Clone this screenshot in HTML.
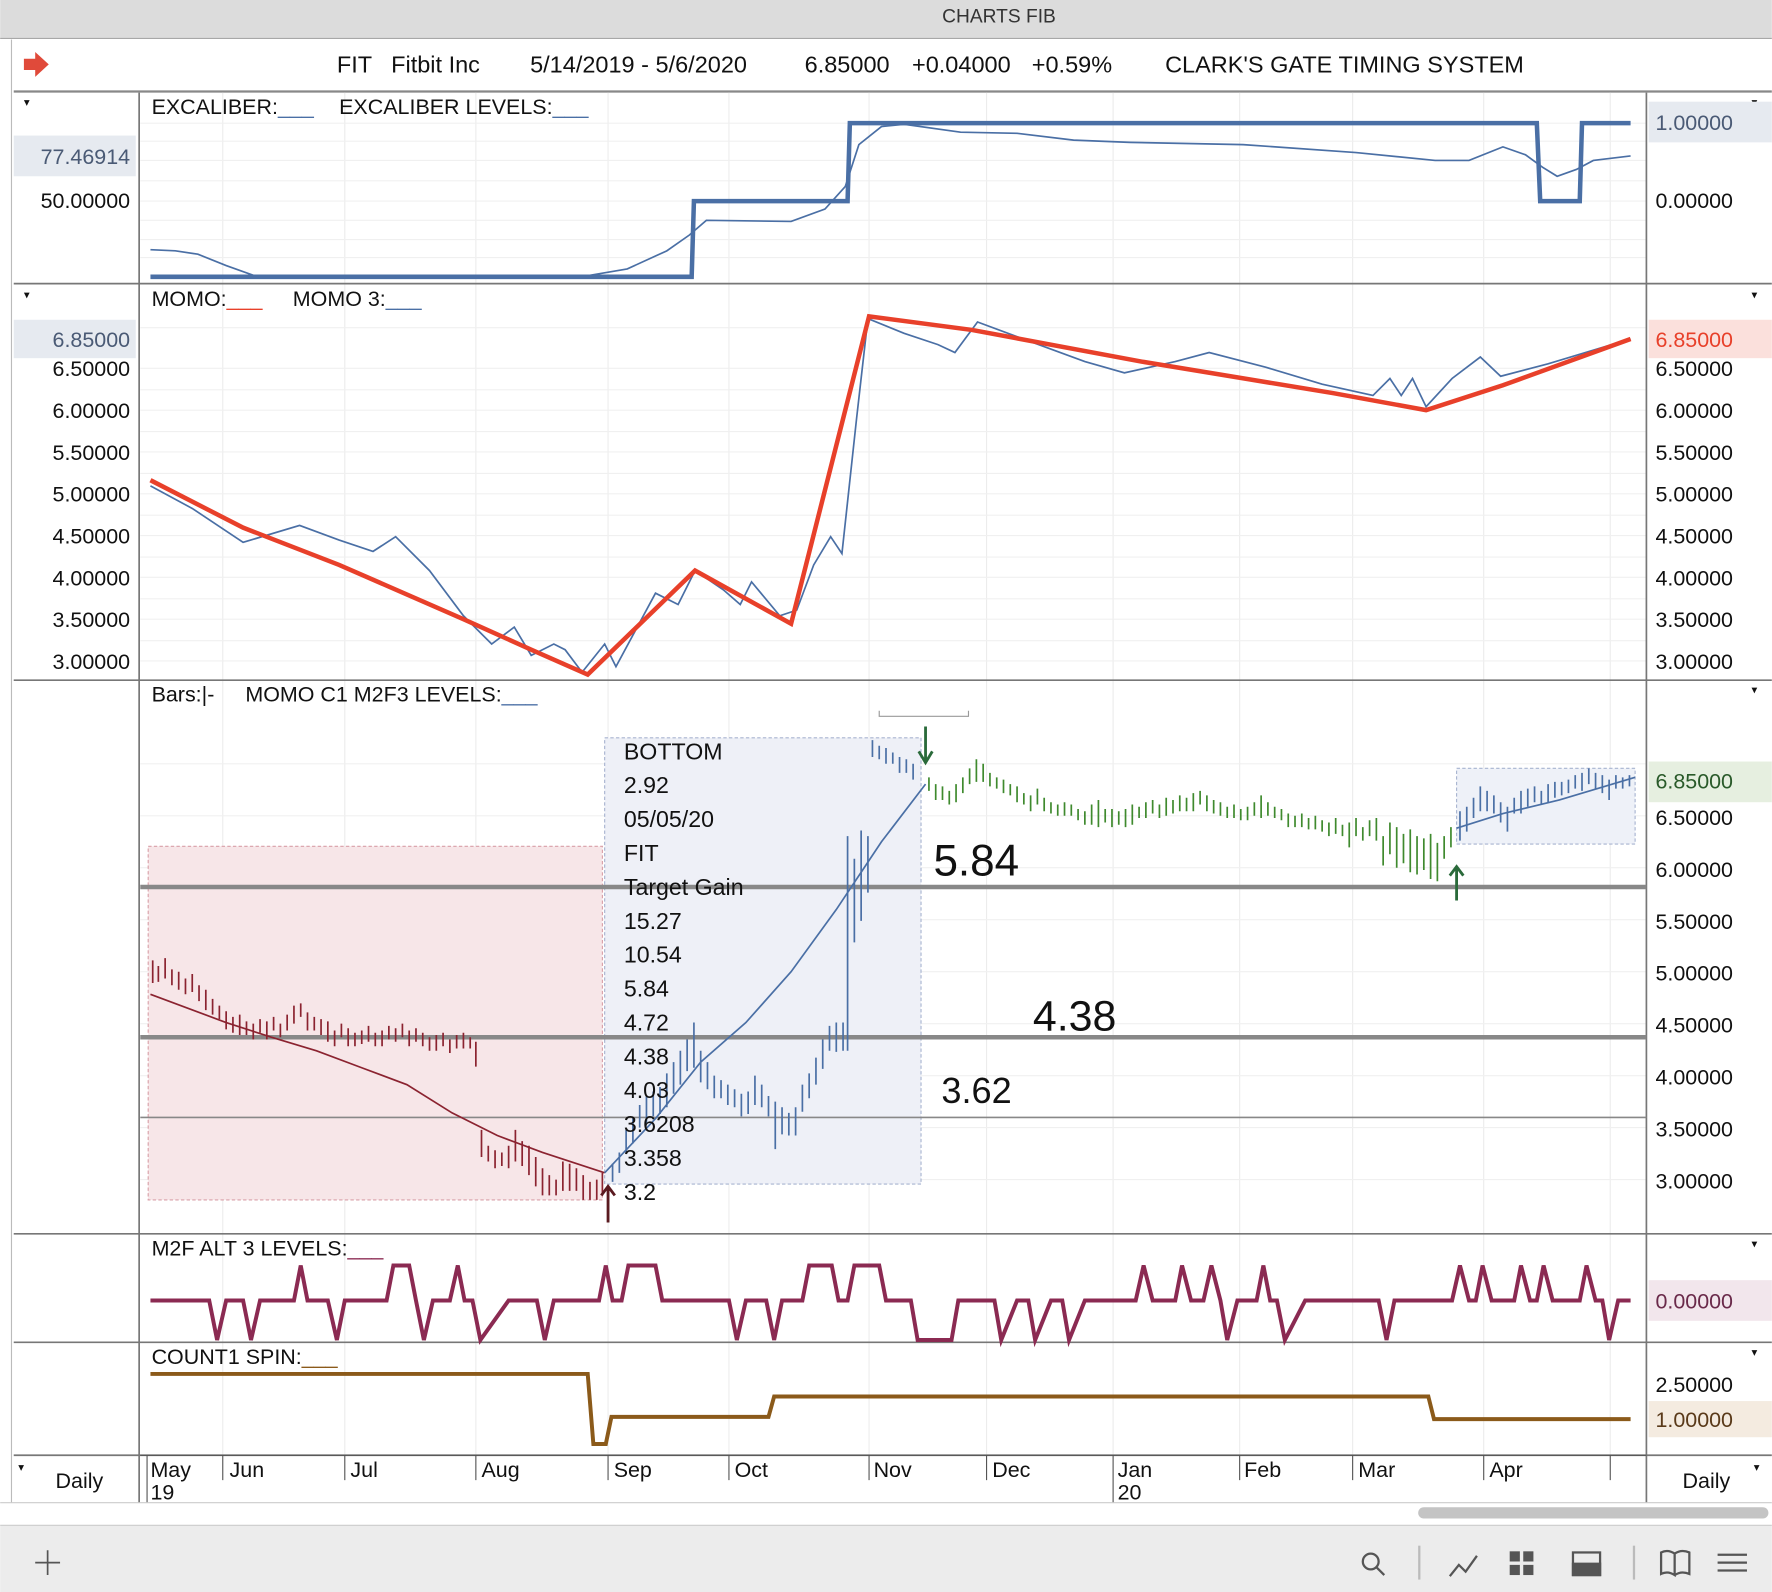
<!DOCTYPE html>
<html><head><meta charset="utf-8"><style>
html,body{margin:0;padding:0;background:#fff;}
svg{display:block;}
text{font-family:"Liberation Sans",Arial,sans-serif;}
</style></head><body>
<svg width="1772" height="1592" viewBox="0 0 1568 1409" xmlns="http://www.w3.org/2000/svg">
<rect x="0" y="0" width="1568" height="34" fill="#dcdcdc"/>
<line x1="0" y1="34" x2="1568" y2="34" stroke="#a8a8a8"/>
<text x="884" y="20" font-size="17" text-anchor="middle" fill="#333">CHARTS FIB</text>
<line x1="10" y1="35" x2="10" y2="1330" stroke="#bbb"/>
<path d="M21 52 h10 v-6 l12 11 l-12 11 v-6 h-10z" fill="#e04a3a"/>
<g font-size="20.8" fill="#111">
<text x="298" y="64">FIT</text><text x="346" y="64">Fitbit Inc</text>
<text x="469" y="64">5/14/2019 - 5/6/2020</text>
<text x="712" y="64">6.85000</text><text x="807" y="64">+0.04000</text><text x="913" y="64">+0.59%</text>
<text x="1031" y="64">CLARK'S GATE TIMING SYSTEM</text>
</g>
<line x1="12" y1="81" x2="1568" y2="81" stroke="#888" stroke-width="2"/>
<g stroke="#ececec" stroke-width="1">
<line x1="197" y1="82" x2="197" y2="1288"/><line x1="305" y1="82" x2="305" y2="1288"/>
<line x1="421" y1="82" x2="421" y2="1288"/><line x1="538" y1="82" x2="538" y2="1288"/>
<line x1="645" y1="82" x2="645" y2="1288"/><line x1="769" y1="82" x2="769" y2="1288"/>
<line x1="873" y1="82" x2="873" y2="1288"/><line x1="985" y1="82" x2="985" y2="1288"/>
<line x1="1097" y1="82" x2="1097" y2="1288"/><line x1="1197" y1="82" x2="1197" y2="1288"/>
<line x1="1313" y1="82" x2="1313" y2="1288"/><line x1="1425" y1="82" x2="1425" y2="1288"/>
</g>
<g stroke="#f0f0f0">
<line x1="124" y1="109" x2="1457" y2="109"/><line x1="124" y1="125" x2="1457" y2="125"/><line x1="124" y1="142" x2="1457" y2="142"/><line x1="124" y1="160" x2="1457" y2="160"/><line x1="124" y1="178" x2="1457" y2="178"/><line x1="124" y1="195" x2="1457" y2="195"/><line x1="124" y1="212" x2="1457" y2="212"/><line x1="124" y1="228" x2="1457" y2="228"/>
<line x1="124" y1="290" x2="1457" y2="290"/><line x1="124" y1="326" x2="1457" y2="326"/><line x1="124" y1="363" x2="1457" y2="363"/><line x1="124" y1="400" x2="1457" y2="400"/><line x1="124" y1="437" x2="1457" y2="437"/><line x1="124" y1="474" x2="1457" y2="474"/><line x1="124" y1="511" x2="1457" y2="511"/><line x1="124" y1="548" x2="1457" y2="548"/><line x1="124" y1="585" x2="1457" y2="585"/>
<line x1="124" y1="345" x2="1457" y2="345"/><line x1="124" y1="382" x2="1457" y2="382"/><line x1="124" y1="419" x2="1457" y2="419"/><line x1="124" y1="456" x2="1457" y2="456"/><line x1="124" y1="493" x2="1457" y2="493"/><line x1="124" y1="530" x2="1457" y2="530"/><line x1="124" y1="567" x2="1457" y2="567"/>
<line x1="124" y1="676" x2="1457" y2="676"/><line x1="124" y1="722" x2="1457" y2="722"/><line x1="124" y1="768" x2="1457" y2="768"/><line x1="124" y1="814" x2="1457" y2="814"/><line x1="124" y1="860" x2="1457" y2="860"/><line x1="124" y1="906" x2="1457" y2="906"/><line x1="124" y1="952" x2="1457" y2="952"/><line x1="124" y1="998" x2="1457" y2="998"/><line x1="124" y1="1044" x2="1457" y2="1044"/>
</g>
<g stroke="#777" stroke-width="1.5">
<line x1="12" y1="251" x2="1568" y2="251"/><line x1="12" y1="602" x2="1568" y2="602"/>
<line x1="12" y1="1092" x2="1568" y2="1092"/><line x1="12" y1="1188" x2="1568" y2="1188"/>
<line x1="12" y1="1288" x2="1568" y2="1288"/>
<line x1="123" y1="82" x2="123" y2="1330"/><line x1="1457" y1="82" x2="1457" y2="1330"/>
</g>
<g fill="#111" font-size="10"><text x="21" y="94">▾</text><text x="21" y="264">▾</text><text x="1550" y="94">▾</text><text x="1550" y="264">▾</text><text x="1550" y="614">▾</text><text x="1550" y="1104">▾</text><text x="1550" y="1200">▾</text><text x="16" y="1302">▾</text><text x="1552" y="1302">▾</text></g>
<g font-size="19" fill="#111">
<text x="134" y="101">EXCALIBER:<tspan fill="#4a6fa5">___</tspan></text>
<text x="300" y="101">EXCALIBER LEVELS:<tspan fill="#4a6fa5">___</tspan></text>
</g>
<rect x="12" y="120" width="108" height="36" fill="#e6eaf0"/>
<text x="115" y="145" font-size="19" fill="#4a5a75" text-anchor="end">77.46914</text>
<text x="115" y="184" font-size="19" fill="#111" text-anchor="end">50.00000</text>
<rect x="1459" y="90" width="109" height="36" fill="#e6eaf0"/>
<text x="1465" y="115" font-size="19" fill="#4a5a75">1.00000</text>
<text x="1465" y="184" font-size="19" fill="#111">0.00000</text>
<polyline fill="none" stroke="#4a6fa5" stroke-width="4" points="133,245 612,245 614,178 750,178 752,109 1360,109 1363,178 1398,178 1400,109 1443,109"/>
<polyline fill="none" stroke="#4a6fa5" stroke-width="1.5" points="133,221 155,222 175,225 200,235 225,244 520,244 555,238 590,222 610,208 625,195 700,196 730,185 748,165 760,128 780,112 800,110 850,117 900,118 950,124 1000,126 1100,128 1200,135 1270,142 1300,142 1330,130 1350,137 1365,148 1378,156 1395,150 1410,142 1443,138"/>
<g font-size="19" fill="#111">
<text x="134" y="271">MOMO:<tspan fill="#e8402a">___</tspan></text>
<text x="259" y="271">MOMO 3:<tspan fill="#4a6fa5">___</tspan></text>
</g>
<rect x="12" y="283" width="108" height="34" fill="#e6eaf0"/>
<text x="115" y="307" font-size="19" fill="#4a5a75" text-anchor="end">6.85000</text>
<rect x="1459" y="283" width="109" height="34" fill="#fbe0dc"/>
<text x="1465" y="307" font-size="19" fill="#e8402a">6.85000</text>
<g font-size="19" fill="#111">
<text x="115" y="333" text-anchor="end">6.50000</text><text x="115" y="370" text-anchor="end">6.00000</text><text x="115" y="407" text-anchor="end">5.50000</text><text x="115" y="444" text-anchor="end">5.00000</text><text x="115" y="481" text-anchor="end">4.50000</text><text x="115" y="518" text-anchor="end">4.00000</text><text x="115" y="555" text-anchor="end">3.50000</text><text x="115" y="592" text-anchor="end">3.00000</text>
<text x="1465" y="333">6.50000</text><text x="1465" y="370">6.00000</text><text x="1465" y="407">5.50000</text><text x="1465" y="444">5.00000</text><text x="1465" y="481">4.50000</text><text x="1465" y="518">4.00000</text><text x="1465" y="555">3.50000</text><text x="1465" y="592">3.00000</text>
</g>
<polyline fill="none" stroke="#4a6fa5" stroke-width="1.5" points="133,430 170,450 215,480 265,465 300,478 330,488 350,475 380,505 410,545 435,570 455,555 470,580 490,570 500,575 515,595 535,570 545,590 580,525 600,535 615,505 640,522 655,535 665,515 690,545 705,540 720,500 735,475 745,490 758,370 768,282 800,295 830,305 845,312 865,285 900,298 960,320 995,330 1040,320 1070,312 1120,325 1170,340 1215,350 1230,335 1240,350 1250,335 1262,360 1285,335 1310,316 1328,333 1370,322 1443,300"/>
<polyline fill="none" stroke="#e8402a" stroke-width="4" points="133,425 215,467 300,500 410,548 470,575 520,597 615,505 700,552 769,280 860,292 1010,320 1180,348 1262,363 1330,341 1443,300"/>
<g font-size="19" fill="#111">
<text x="134" y="621">Bars:|-</text>
<text x="217" y="621">MOMO C1 M2F3 LEVELS:<tspan fill="#4a6fa5">___</tspan></text>
</g>
<path d="M778 629 v5 h79 v-5" fill="none" stroke="#999"/>
<rect x="131" y="749" width="402" height="313" fill="#f7e6e8" stroke="#d9a0a8" stroke-dasharray="3,2"/>
<rect x="535" y="653" width="280" height="395" fill="#eef0f7" stroke="#a8b4d0" stroke-dasharray="3,2"/>
<rect x="1289" y="680" width="158" height="67" fill="#eef1f8" stroke="#a8b4d0" stroke-dasharray="3,2"/>
<line x1="124" y1="785" x2="1457" y2="785" stroke="#888" stroke-width="4"/>
<line x1="124" y1="918" x2="1457" y2="918" stroke="#888" stroke-width="4"/>
<line x1="124" y1="989" x2="1457" y2="989" stroke="#888" stroke-width="1.5"/>
<polyline fill="none" stroke="#8b2330" stroke-width="1.5" points="133,880 200,905 240,918 280,930 320,945 360,960 400,985 440,1005 480,1020 535,1038"/>
<path fill="none" stroke="#8b2330" stroke-width="1.5" d="M135 850v20M140 855v14M146 848v18M152 858v14M158 860v16M164 866v14M170 862v16M176 872v14M182 876v18M188 884v14M194 890v12M200 895v16M206 900v14M212 898v18M218 904v12M224 906v14M230 902v12M236 904v16M242 900v12M248 906v12M254 898v14M260 890v16M266 888v12M272 896v16M278 900v12M284 902v14M290 904v18M296 912v14M302 906v12M308 910v16M314 914v12M320 912v12M326 908v14M332 914v12M338 912v14M344 908v12M350 910v12M356 906v12M362 912v14M368 910v12M374 914v12M380 918v12M386 916v14M392 914v12M398 920v12M404 916v12M410 914v14M416 918v10M421 922v22M426 1000v24M432 1014v14M438 1018v16M444 1020v12M450 1014v20M456 1000v28M462 1010v22M468 1014v26M474 1024v26M480 1034v24M486 1040v18M492 1044v14M498 1028v26M504 1030v24M510 1034v20M516 1040v22M522 1046v16M528 1044v18M533 1038v20"/>
<path d="M538 1082v-30M532 1058l6-8l6 8" fill="none" stroke="#5a1a20" stroke-width="2.5"/>
<polyline fill="none" stroke="#4a6fa5" stroke-width="1.5" points="535,1038 580,990 620,940 660,905 700,860 740,805 780,745 819,694"/>
<path fill="none" stroke="#4a6fa5" stroke-width="1.5" d="M542 1030v16M548 1020v18M554 1000v20M560 990v22M566 978v20M572 970v24M578 966v22M584 962v24M590 950v30M596 940v28M602 930v30M608 920v28M614 905v40M620 930v28M626 940v24M632 952v20M638 956v16M644 960v18M650 964v16M656 968v20M662 966v20M668 952v26M674 960v20M680 970v18M686 975v42M692 980v24M698 985v20M704 980v25M710 960v24M716 950v22M722 936v24M728 920v26M734 908v22M740 905v26M746 905v25M750 740v190M756 760v74M762 735v80M768 740v50M772 655v15M778 660v12M784 662v14M790 666v10M796 670v14M802 672v12M808 676v14"/>
<path d="M819 643v30M813 665l6 10l6-10" fill="none" stroke="#2a6a3a" stroke-width="2.5"/>
<path fill="none" stroke="#3f8a2e" stroke-width="1.5" d="M822 688v12M828 694v14M834 696v12M840 700v12M846 694v16M852 688v14M858 680v14M864 672v20M870 676v16M876 684v12M882 688v10M888 690v12M894 694v10M900 696v14M906 702v10M912 704v14M918 698v14M924 706v12M930 710v10M936 712v10M942 710v12M948 712v10M954 716v10M960 718v12M966 712v18M972 708v24M978 716v12M984 716v16M990 718v12M996 716v16M1002 712v18M1008 714v10M1014 710v14M1020 708v12M1026 712v12M1032 706v16M1038 708v12M1044 704v14M1050 706v12M1056 702v16M1062 700v12M1068 704v14M1074 708v12M1080 710v12M1086 714v10M1092 712v12M1098 716v10M1104 714v12M1110 710v12M1116 704v20M1122 710v12M1128 714v10M1134 716v10M1140 720v12M1146 722v10M1152 720v12M1158 724v10M1164 722v12M1170 726v10M1176 728v12M1182 724v14M1188 730v10M1194 728v22M1200 724v16M1206 732v12M1212 726v14M1218 724v20M1224 740v26M1230 728v28M1236 732v36M1242 738v26M1248 734v38M1254 740v34M1260 742v28M1266 738v40M1272 746v34M1278 740v20M1284 732v18"/>
<path d="M1289 797v-30M1283 775l6-8l6 8" fill="none" stroke="#2a6a3a" stroke-width="2.5"/>
<polyline fill="none" stroke="#4a6fa5" stroke-width="1.5" points="1289,733 1330,720 1380,708 1447,688"/>
<path fill="none" stroke="#4a6fa5" stroke-width="1.5" d="M1292 718v26M1298 714v22M1304 706v18M1310 696v22M1316 700v18M1322 704v16M1328 710v18M1334 714v22M1340 706v14M1346 700v20M1352 698v16M1358 696v14M1364 700v12M1370 694v16M1376 692v14M1382 692v12M1388 690v12M1394 686v12M1400 684v16M1406 680v14M1412 684v14M1418 686v16M1424 690v18M1430 686v12M1436 688v10M1442 686v10"/>
<g font-size="20.5" fill="#111">
<text x="552" y="672">BOTTOM</text><text x="552" y="702">2.92</text><text x="552" y="732">05/05/20</text><text x="552" y="762">FIT</text><text x="552" y="792">Target Gain</text><text x="552" y="822">15.27</text><text x="552" y="852">10.54</text><text x="552" y="882">5.84</text><text x="552" y="912">4.72</text><text x="552" y="942">4.38</text><text x="552" y="972">4.03</text><text x="552" y="1002">3.6208</text><text x="552" y="1032">3.358</text><text x="552" y="1062">3.2</text>
</g>
<text x="826" y="775" font-size="39" fill="#111">5.84</text>
<text x="914" y="912" font-size="38" fill="#111">4.38</text>
<text x="833" y="976" font-size="32" fill="#111">3.62</text>
<rect x="1459" y="674" width="109" height="36" fill="#e6efe0"/>
<text x="1465" y="698" font-size="19" fill="#2a5a2a">6.85000</text>
<g font-size="19" fill="#111">
<text x="1465" y="730">6.50000</text><text x="1465" y="776">6.00000</text><text x="1465" y="822">5.50000</text><text x="1465" y="868">5.00000</text><text x="1465" y="914">4.50000</text><text x="1465" y="960">4.00000</text><text x="1465" y="1006">3.50000</text><text x="1465" y="1052">3.00000</text>
</g>
<text x="134" y="1111" font-size="19" fill="#111">M2F ALT 3 LEVELS:<tspan fill="#8b2a52">___</tspan></text>
<polyline fill="none" stroke="#8b2a52" stroke-width="3.5" points="133,1151 185,1151 192,1186 200,1151 215,1151 222,1186 230,1151 260,1151 266,1120 272,1151 290,1151 298,1186 305,1151 342,1151 348,1120 362,1120 368,1151 375,1186 383,1151 398,1151 405,1120 411,1151 418,1151 425,1186 450,1151 475,1151 482,1186 490,1151 530,1151 536,1120 542,1151 550,1151 556,1120 580,1120 586,1151 645,1151 652,1186 660,1151 678,1151 685,1186 692,1151 710,1151 716,1120 736,1120 742,1151 750,1151 756,1120 778,1120 784,1151 806,1151 812,1186 842,1186 848,1151 880,1151 886,1186 900,1151 910,1151 916,1186 930,1151 940,1151 946,1186 960,1151 1005,1151 1012,1120 1020,1151 1040,1151 1046,1120 1054,1151 1065,1151 1072,1120 1080,1151 1086,1186 1095,1151 1112,1151 1118,1120 1124,1151 1130,1151 1137,1186 1155,1151 1220,1151 1227,1186 1234,1151 1285,1151 1292,1120 1300,1151 1306,1151 1312,1120 1320,1151 1340,1151 1346,1120 1354,1151 1360,1151 1366,1120 1374,1151 1398,1151 1404,1120 1412,1151 1418,1151 1424,1186 1432,1151 1443,1151"/>
<rect x="1459" y="1133" width="109" height="36" fill="#f2e6ec"/>
<text x="1465" y="1158" font-size="19" fill="#6a2a4a">0.00000</text>
<text x="134" y="1207" font-size="19" fill="#111">COUNT1 SPIN:<tspan fill="#8b5a1a">___</tspan></text>
<polyline fill="none" stroke="#8b5a1a" stroke-width="3.5" points="133,1216 520,1216 525,1278 536,1278 541,1254 680,1254 685,1236 1264,1236 1269,1256 1443,1256"/>
<text x="1465" y="1232" font-size="19" fill="#111">2.50000</text>
<rect x="1459" y="1240" width="109" height="32" fill="#f4ebe0"/>
<text x="1465" y="1263" font-size="19" fill="#5a3a1a">1.00000</text>
<g stroke="#555"><line x1="124" y1="1288" x2="1457" y2="1288"/>
<line x1="197" y1="1288" x2="197" y2="1310"/><line x1="305" y1="1288" x2="305" y2="1310"/><line x1="421" y1="1288" x2="421" y2="1310"/><line x1="538" y1="1288" x2="538" y2="1310"/><line x1="645" y1="1288" x2="645" y2="1310"/><line x1="769" y1="1288" x2="769" y2="1310"/><line x1="873" y1="1288" x2="873" y2="1310"/><line x1="985" y1="1288" x2="985" y2="1330"/><line x1="1097" y1="1288" x2="1097" y2="1310"/><line x1="1197" y1="1288" x2="1197" y2="1310"/><line x1="1313" y1="1288" x2="1313" y2="1310"/><line x1="1425" y1="1288" x2="1425" y2="1310"/><line x1="130" y1="1288" x2="130" y2="1330"/></g>
<g font-size="19" fill="#111">
<text x="133" y="1307">May</text><text x="133" y="1327">19</text><text x="203" y="1307">Jun</text><text x="310" y="1307">Jul</text><text x="426" y="1307">Aug</text><text x="543" y="1307">Sep</text><text x="650" y="1307">Oct</text><text x="773" y="1307">Nov</text><text x="878" y="1307">Dec</text><text x="989" y="1307">Jan</text><text x="989" y="1327">20</text><text x="1101" y="1307">Feb</text><text x="1202" y="1307">Mar</text><text x="1318" y="1307">Apr</text>
<text x="49" y="1317">Daily</text><text x="1489" y="1317">Daily</text>
</g>
<line x1="0" y1="1330" x2="1568" y2="1330" stroke="#ccc"/>
<rect x="1255" y="1334" width="310" height="10" rx="5" fill="#c4c4c4"/>
<rect x="0" y="1350" width="1568" height="59" fill="#ececec"/>
<line x1="0" y1="1350" x2="1568" y2="1350" stroke="#ccc"/>
<g stroke="#555" stroke-width="2" fill="none">
<path d="M42 1372v22M31 1383h22" stroke-width="1.5"/>
<circle cx="1213" cy="1382" r="7"/><path d="M1218 1387l7 7"/>
<line x1="1256" y1="1368" x2="1256" y2="1398" stroke="#bbb"/>
<path d="M1283 1395l8-10l6 6l10-14"/>
<rect x="1392" y="1374" width="24" height="20"/><rect x="1392" y="1384" width="24" height="10" fill="#555"/>
<line x1="1446" y1="1368" x2="1446" y2="1398" stroke="#bbb"/>
<path d="M1470 1374q6-3 12 1v19q-6-4-12-1zM1482 1375q6-4 13-1v19q-7-3-13 1"/>
<path d="M1520 1376h26M1520 1383h26M1520 1390h26"/>
</g>
<g fill="#555"><rect x="1336" y="1373" width="9" height="9"/><rect x="1348" y="1373" width="9" height="9"/><rect x="1336" y="1385" width="9" height="9"/><rect x="1348" y="1385" width="9" height="9"/></g>
</svg>
</body></html>
